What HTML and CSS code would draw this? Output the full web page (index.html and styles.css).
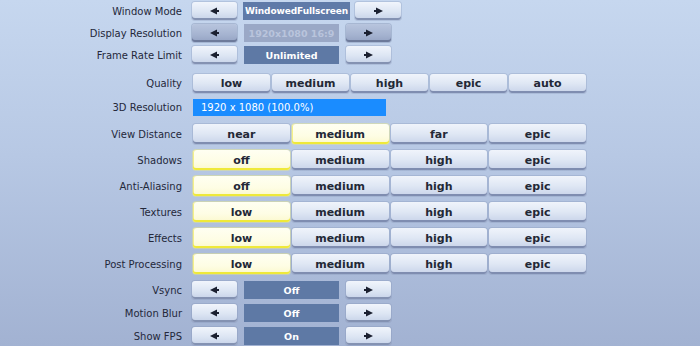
FILE: index.html
```html
<!DOCTYPE html>
<html lang="en">
<head>
  <meta charset="UTF-8">
  <title>Video Settings</title>
  <link rel="stylesheet" href="styles.css">
</head>
<body>
  <div class="settings">

    <div class="row arrow-row first">
      <span class="label">Window Mode</span>
      <div class="stepper">
        <button class="arrow"><svg width="9" height="8" viewBox="0 0 9 8"><polygon points="0,4 7,0.5 7,7.5"/><rect x="7" y="3" width="2" height="2"/></svg></button>
        <span class="value wide">WindowedFullscreen</span>
        <button class="arrow"><svg width="9" height="8" viewBox="0 0 9 8"><polygon points="9,4 2,0.5 2,7.5"/><rect x="0" y="3" width="2" height="2"/></svg></button>
      </div>
    </div>

    <div class="row arrow-row">
      <span class="label">Display Resolution</span>
      <div class="stepper">
        <button class="arrow disabled"><svg width="9" height="8" viewBox="0 0 9 8"><polygon points="0,4 7,0.5 7,7.5"/><rect x="7" y="3" width="2" height="2"/></svg></button>
        <span class="value muted">1920x1080 16:9</span>
        <button class="arrow disabled"><svg width="9" height="8" viewBox="0 0 9 8"><polygon points="9,4 2,0.5 2,7.5"/><rect x="0" y="3" width="2" height="2"/></svg></button>
      </div>
    </div>

    <div class="row arrow-row">
      <span class="label">Frame Rate Limit</span>
      <div class="stepper">
        <button class="arrow"><svg width="9" height="8" viewBox="0 0 9 8"><polygon points="0,4 7,0.5 7,7.5"/><rect x="7" y="3" width="2" height="2"/></svg></button>
        <span class="value">Unlimited</span>
        <button class="arrow"><svg width="9" height="8" viewBox="0 0 9 8"><polygon points="9,4 2,0.5 2,7.5"/><rect x="0" y="3" width="2" height="2"/></svg></button>
      </div>
    </div>

    <div class="row quality-row">
      <span class="label">Quality</span>
      <div class="tiers five">
        <button class="tier">low</button>
        <button class="tier">medium</button>
        <button class="tier">high</button>
        <button class="tier">epic</button>
        <button class="tier">auto</button>
      </div>
    </div>

    <div class="row res-row">
      <span class="label">3D Resolution</span>
      <div class="res-bar">1920 x 1080 (100.0%)</div>
    </div>

    <div class="row tier-row view-row">
      <span class="label">View Distance</span>
      <div class="tiers">
        <button class="tier">near</button>
        <button class="tier active">medium</button>
        <button class="tier">far</button>
        <button class="tier">epic</button>
      </div>
    </div>

    <div class="row tier-row">
      <span class="label">Shadows</span>
      <div class="tiers">
        <button class="tier active">off</button>
        <button class="tier">medium</button>
        <button class="tier">high</button>
        <button class="tier">epic</button>
      </div>
    </div>

    <div class="row tier-row">
      <span class="label">Anti-Aliasing</span>
      <div class="tiers">
        <button class="tier active">off</button>
        <button class="tier">medium</button>
        <button class="tier">high</button>
        <button class="tier">epic</button>
      </div>
    </div>

    <div class="row tier-row">
      <span class="label">Textures</span>
      <div class="tiers">
        <button class="tier active">low</button>
        <button class="tier">medium</button>
        <button class="tier">high</button>
        <button class="tier">epic</button>
      </div>
    </div>

    <div class="row tier-row">
      <span class="label">Effects</span>
      <div class="tiers">
        <button class="tier active">low</button>
        <button class="tier">medium</button>
        <button class="tier">high</button>
        <button class="tier">epic</button>
      </div>
    </div>

    <div class="row tier-row">
      <span class="label">Post Processing</span>
      <div class="tiers">
        <button class="tier active">low</button>
        <button class="tier">medium</button>
        <button class="tier">high</button>
        <button class="tier">epic</button>
      </div>
    </div>

    <div class="row arrow-row toggle-first">
      <span class="label">Vsync</span>
      <div class="stepper">
        <button class="arrow"><svg width="9" height="8" viewBox="0 0 9 8"><polygon points="0,4 7,0.5 7,7.5"/><rect x="7" y="3" width="2" height="2"/></svg></button>
        <span class="value">Off</span>
        <button class="arrow"><svg width="9" height="8" viewBox="0 0 9 8"><polygon points="9,4 2,0.5 2,7.5"/><rect x="0" y="3" width="2" height="2"/></svg></button>
      </div>
    </div>

    <div class="row arrow-row toggle">
      <span class="label">Motion Blur</span>
      <div class="stepper">
        <button class="arrow"><svg width="9" height="8" viewBox="0 0 9 8"><polygon points="0,4 7,0.5 7,7.5"/><rect x="7" y="3" width="2" height="2"/></svg></button>
        <span class="value">Off</span>
        <button class="arrow"><svg width="9" height="8" viewBox="0 0 9 8"><polygon points="9,4 2,0.5 2,7.5"/><rect x="0" y="3" width="2" height="2"/></svg></button>
      </div>
    </div>

    <div class="row arrow-row toggle">
      <span class="label">Show FPS</span>
      <div class="stepper">
        <button class="arrow"><svg width="9" height="8" viewBox="0 0 9 8"><polygon points="0,4 7,0.5 7,7.5"/><rect x="7" y="3" width="2" height="2"/></svg></button>
        <span class="value">On</span>
        <button class="arrow"><svg width="9" height="8" viewBox="0 0 9 8"><polygon points="9,4 2,0.5 2,7.5"/><rect x="0" y="3" width="2" height="2"/></svg></button>
      </div>
    </div>

  </div>
</body>
</html>
```

FILE: styles.css
```css
* { box-sizing: border-box; }
html, body {
  height: 100%;
}
body {
  margin: 0;
  overflow: hidden;
  font-family: 'DejaVu Sans', sans-serif;
  background: linear-gradient(180deg, #c6d7ef 0%, #b7c8e4 45%, #a2b2d2 100%);
}
.settings {
  display: flex;
  flex-direction: column;
  padding-top: 2px;
}
.row {
  display: flex;
  align-items: center;
}
.label {
  width: 182px;
  flex: none;
  text-align: right;
  font-size: 10px;
  color: #24283a;
}

/* stepper rows */
.arrow-row {
  height: 18px;
  margin-top: 4px;
}
.arrow-row.first { margin-top: 0; }
.toggle-first { margin-top: 7px; }
.toggle { margin-top: 5px; }
.stepper {
  display: flex;
  align-items: stretch;
  height: 100%;
  margin-left: 10px;
  gap: 7px;
}
button {
  margin: 0;
  padding: 0;
  border: none;
  cursor: pointer;
  font-family: 'DejaVu Sans', sans-serif;
}
.arrow {
  width: 45px;
  display: flex;
  align-items: center;
  justify-content: center;
  border-radius: 3px;
  background: linear-gradient(180deg, #f1f5fc 0%, #dce5f3 55%, #c6d2e8 100%);
  box-shadow: inset 0 -2px 0 #8492b2, 0 0 0 1px rgba(120,135,170,0.25);
}
.arrow svg { fill: #1b2030; }
.arrow.disabled {
  background: linear-gradient(180deg, #b8c5de 0%, #a5b3d0 60%, #94a3c3 100%);
  box-shadow: inset 0 -2px 0 #6d7a9a, 0 0 0 1px rgba(100,115,150,0.3);
}
.value {
  width: 95px;
  display: flex;
  align-items: center;
  justify-content: center;
  background: #5e79a5;
  color: #fff;
  font-weight: bold;
  font-size: 9.5px;
}
.value.wide {
  width: 107px;
  font-size: 9px;
  letter-spacing: -0.1px;
  margin-right: -1px;
  background: #5f7aa8;
}
.value.muted {
  background: #9aa8c6;
  color: #b9c4dc;
}
.arrow-row.first .stepper { gap: 6px; }
.arrow-row.first .arrow:last-child { width: 46px; }

/* tier rows */
.quality-row {
  height: 19px;
  margin-top: 10px;
}
.tiers {
  display: grid;
  grid-template-columns: repeat(4, 1fr);
  gap: 2px;
  width: 393px;
  height: 100%;
  margin-left: 11px;
}
.tiers.five { grid-template-columns: repeat(5, 1fr); }
.tier {
  border-radius: 3px;
  font-size: 11px;
  font-weight: bold;
  color: #232836;
  background: linear-gradient(180deg, #f0f4fb 0%, #dfe7f4 50%, #c8d3e9 100%);
  box-shadow: inset 0 -2px 0 #7f8db0, 0 0 0 1px rgba(120,135,170,0.25);
}
.tier.active {
  background: linear-gradient(180deg, #fffff2 0%, #fefde4 60%, #fbf8cc 100%);
  box-shadow: inset 0 -2px 0 #efe93a, inset 1px 0 0 #f5f08a, 0 0 0 1px rgba(240,235,120,0.4);
}
.tier-row {
  height: 20px;
  margin-top: 6px;
}
.view-row { margin-top: 8px; }

/* 3D resolution */
.res-row {
  height: 17px;
  margin-top: 6px;
}
.res-bar {
  margin-left: 11px;
  width: 193px;
  height: 100%;
  display: flex;
  align-items: center;
  padding-left: 8px;
  background: #1a8cff;
  color: #fff;
  font-size: 10px;
}
```
